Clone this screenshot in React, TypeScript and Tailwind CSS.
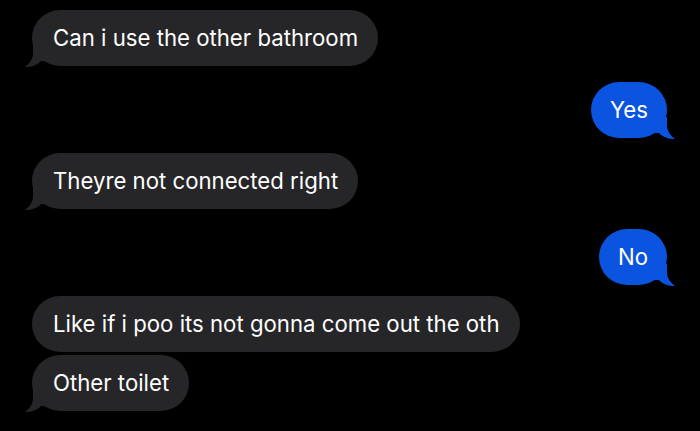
const font = { fontFamily: 'Inter, "Noto Sans", sans-serif' };

function Tail({ side, color }: { side: 'left' | 'right'; color: string }) {
    const pos = side === 'left' ? 'left-[-7px]' : 'right-[-8px] -scale-x-100';
    return (
        <svg className={`absolute bottom-[-1px] ${pos}`} width="24" height="22" viewBox="0 0 24 22">
            <path d="M8 0 L8 8 C8 14 5 18 0 22 C7 22 12 20 16 16 L24 16 L24 0 Z" className={color} />
        </svg>
    );
}

function Received({ text, tail, className = '' }: { text: string; tail?: boolean; className?: string }) {
    return (
        <div className={`flex justify-start pl-[32px] ${className}`}>
            <div className="relative rounded-[28px] bg-[#262628] pl-[21px] pr-[20px] h-[56px] flex items-center text-[22.2px] text-white">
                {tail && <Tail side="left" color="fill-[#262628]" />}
                <span className="relative">{text}</span>
            </div>
        </div>
    );
}

function Sent({ text, className = '' }: { text: string; className?: string }) {
    return (
        <div className={`flex justify-end pr-[33px] ${className}`}>
            <div className="relative rounded-[28px] bg-[#0a54df] pl-[19px] pr-[19px] h-[56px] flex items-center text-[22.2px] text-white">
                <Tail side="right" color="fill-[#0a54df]" />
                <span className="relative">{text}</span>
            </div>
        </div>
    );
}

export default function App() {
    return (
        <div className="w-[700px] h-[431px] bg-black overflow-hidden pt-[10px]" style={font}>
            <Received text="Can i use the other bathroom" tail />
            <Sent text="Yes" className="mt-[16px]" />
            <Received text="Theyre not connected right" tail className="mt-[15px]" />
            <Sent text="No" className="mt-[20px]" />
            <Received text="Like if i poo its not gonna come out the oth" className="mt-[11px]" />
            <Received text="Other toilet" tail className="mt-[3px]" />
        </div>
    );
}
